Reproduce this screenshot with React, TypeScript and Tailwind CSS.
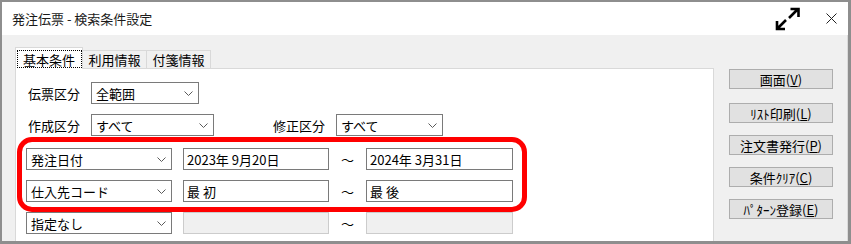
const font = "font-['Noto_Sans_CJK_JP','Noto_Sans',sans-serif]";

function Chevron() {
  return (
    <svg width="9" height="5" viewBox="0 0 9 5" className="shrink-0">
      <path d="M0.5 0.5 L4.5 4.5 L8.5 0.5" stroke="#5a5a5a" strokeWidth="1" fill="none" />
    </svg>
  );
}

function Select({ value, className }: { value: string; className: string }) {
  return (
    <div
      className={`flex h-[22px] items-center justify-between border border-[#7a7a7a] bg-white pl-[4px] pr-[5px] ${className}`}
    >
      <span className="leading-none">{value}</span>
      <Chevron />
    </div>
  );
}

function TextBox({ value, className, disabled }: { value?: string; className: string; disabled?: boolean }) {
  return (
    <div
      className={`flex h-[22px] items-center pl-[3px] ${
        disabled ? "border border-[#cccccc] bg-[#f0f0f0]" : "border border-[#7a7a7a] bg-white"
      } ${className}`}
    >
      <span className="leading-none">{value}</span>
    </div>
  );
}

function RangeRow({
  field,
  from,
  to,
  disabled,
}: {
  field: string;
  from?: string;
  to?: string;
  disabled?: boolean;
}) {
  return (
    <div className="flex items-center">
      <Select value={field} className="w-[146px]" />
      <TextBox value={from} disabled={disabled} className="ml-[11px] w-[146px]" />
      <span className="w-[37px] text-center leading-none">～</span>
      <TextBox value={to} disabled={disabled} className="w-[147px]" />
    </div>
  );
}

const buttons = [
  { label: "画面(", key: "V", top: "mt-0" },
  { label: "ﾘｽﾄ印刷(", key: "L", top: "mt-[14px]" },
  { label: "注文書発行(", key: "P", top: "mt-[12px]" },
  { label: "条件ｸﾘｱ(", key: "C", top: "mt-[12px]" },
  { label: "ﾊﾟﾀｰﾝ登録(", key: "E", top: "mt-[12px]" },
];

export default function App() {
  return (
    <div
      className={`flex h-[244px] w-[851px] flex-col overflow-hidden border-t-2 border-r-[3px] border-b-[3px] border-l-2 border-[#8e8e8e] bg-[#f0f0f0] text-[13px] text-black ${font}`}
    >
      {/* title bar */}
      <div className="flex h-[33px] shrink-0 items-center bg-white pl-[10px] pr-[11px]">
        <span className="leading-none text-[#1a1a1a]">発注伝票 - 検索条件設定</span>
        <svg width="26" height="24" viewBox="0 0 26 24" className="ml-auto">
          <path d="M14 11 L23 2 M15.5 2 H23.5 V10" stroke="#000" strokeWidth="2.6" fill="none" />
          <path d="M11 13 L2 22 M2 14 V22 H10" stroke="#000" strokeWidth="2.6" fill="none" />
        </svg>
        <svg width="11" height="11" viewBox="0 0 11 11" className="ml-[25px]">
          <path d="M0.5 0.5 L10.5 10.5 M10.5 0.5 L0.5 10.5" stroke="#222" strokeWidth="1" fill="none" />
        </svg>
      </div>

      <div className="flex flex-1">
        {/* left: tabs + panel */}
        <div className="flex w-[712px] flex-col pl-[13px] pt-[12px]">
          <div className="flex h-[21px] items-end">
            <div className="relative z-10 -mb-px flex h-[22px] w-[68px] items-start justify-center border border-b-0 border-[#d9d9d9] bg-white pt-[2px]">
              <span className="flex h-[18px] w-[65px] items-center justify-center border border-dotted border-black leading-none">
                基本条件
              </span>
            </div>
            <div className="flex h-[18px] w-[64px] items-center justify-center border border-b-0 border-l-0 border-[#d9d9d9] leading-none">
              利用情報
            </div>
            <div className="flex h-[18px] w-[64px] items-center justify-center border border-b-0 border-l-0 border-[#d9d9d9] leading-none">
              付箋情報
            </div>
          </div>

          <div className="flex flex-1 flex-col border border-b-0 border-[#d9d9d9] bg-white pt-[13px]">
            <div className="flex items-center pl-[12px]">
              <span className="w-[63px] leading-none">伝票区分</span>
              <Select value="全範囲" className="w-[108px]" />
            </div>
            <div className="mt-[10px] flex items-center pl-[12px]">
              <span className="w-[63px] leading-none">作成区分</span>
              <Select value="すべて" className="w-[123px]" />
              <span className="ml-[59px] w-[63px] leading-none">修正区分</span>
              <Select value="すべて" className="w-[107px]" />
            </div>

            <div className="ml-[1px] mt-[1px] flex w-[510px] flex-col gap-[10px] rounded-[15px] border-[5px] border-[#ff0000] pb-[5px] pl-[4px] pt-[6px]">
              <RangeRow field="発注日付" from="2023年 9月20日" to="2024年 3月31日" />
              <RangeRow field="仕入先コード" from="最 初" to="最 後" />
            </div>

            <div className="pl-[10px]">
              <RangeRow field="指定なし" disabled />
            </div>
          </div>
        </div>

        {/* right: buttons */}
        <div className="flex w-[134px] flex-col border-r border-[#dadada] pl-[15px] pt-[34px]">
          {buttons.map((b) => (
            <button
              key={b.key}
              className={`flex h-[20px] w-[104px] items-center justify-center border border-[#adadad] bg-[#e1e1e1] leading-none ${b.top}`}
            >
              {b.label}
              <span className="underline">{b.key}</span>)
            </button>
          ))}
        </div>
      </div>
    </div>
  );
}
